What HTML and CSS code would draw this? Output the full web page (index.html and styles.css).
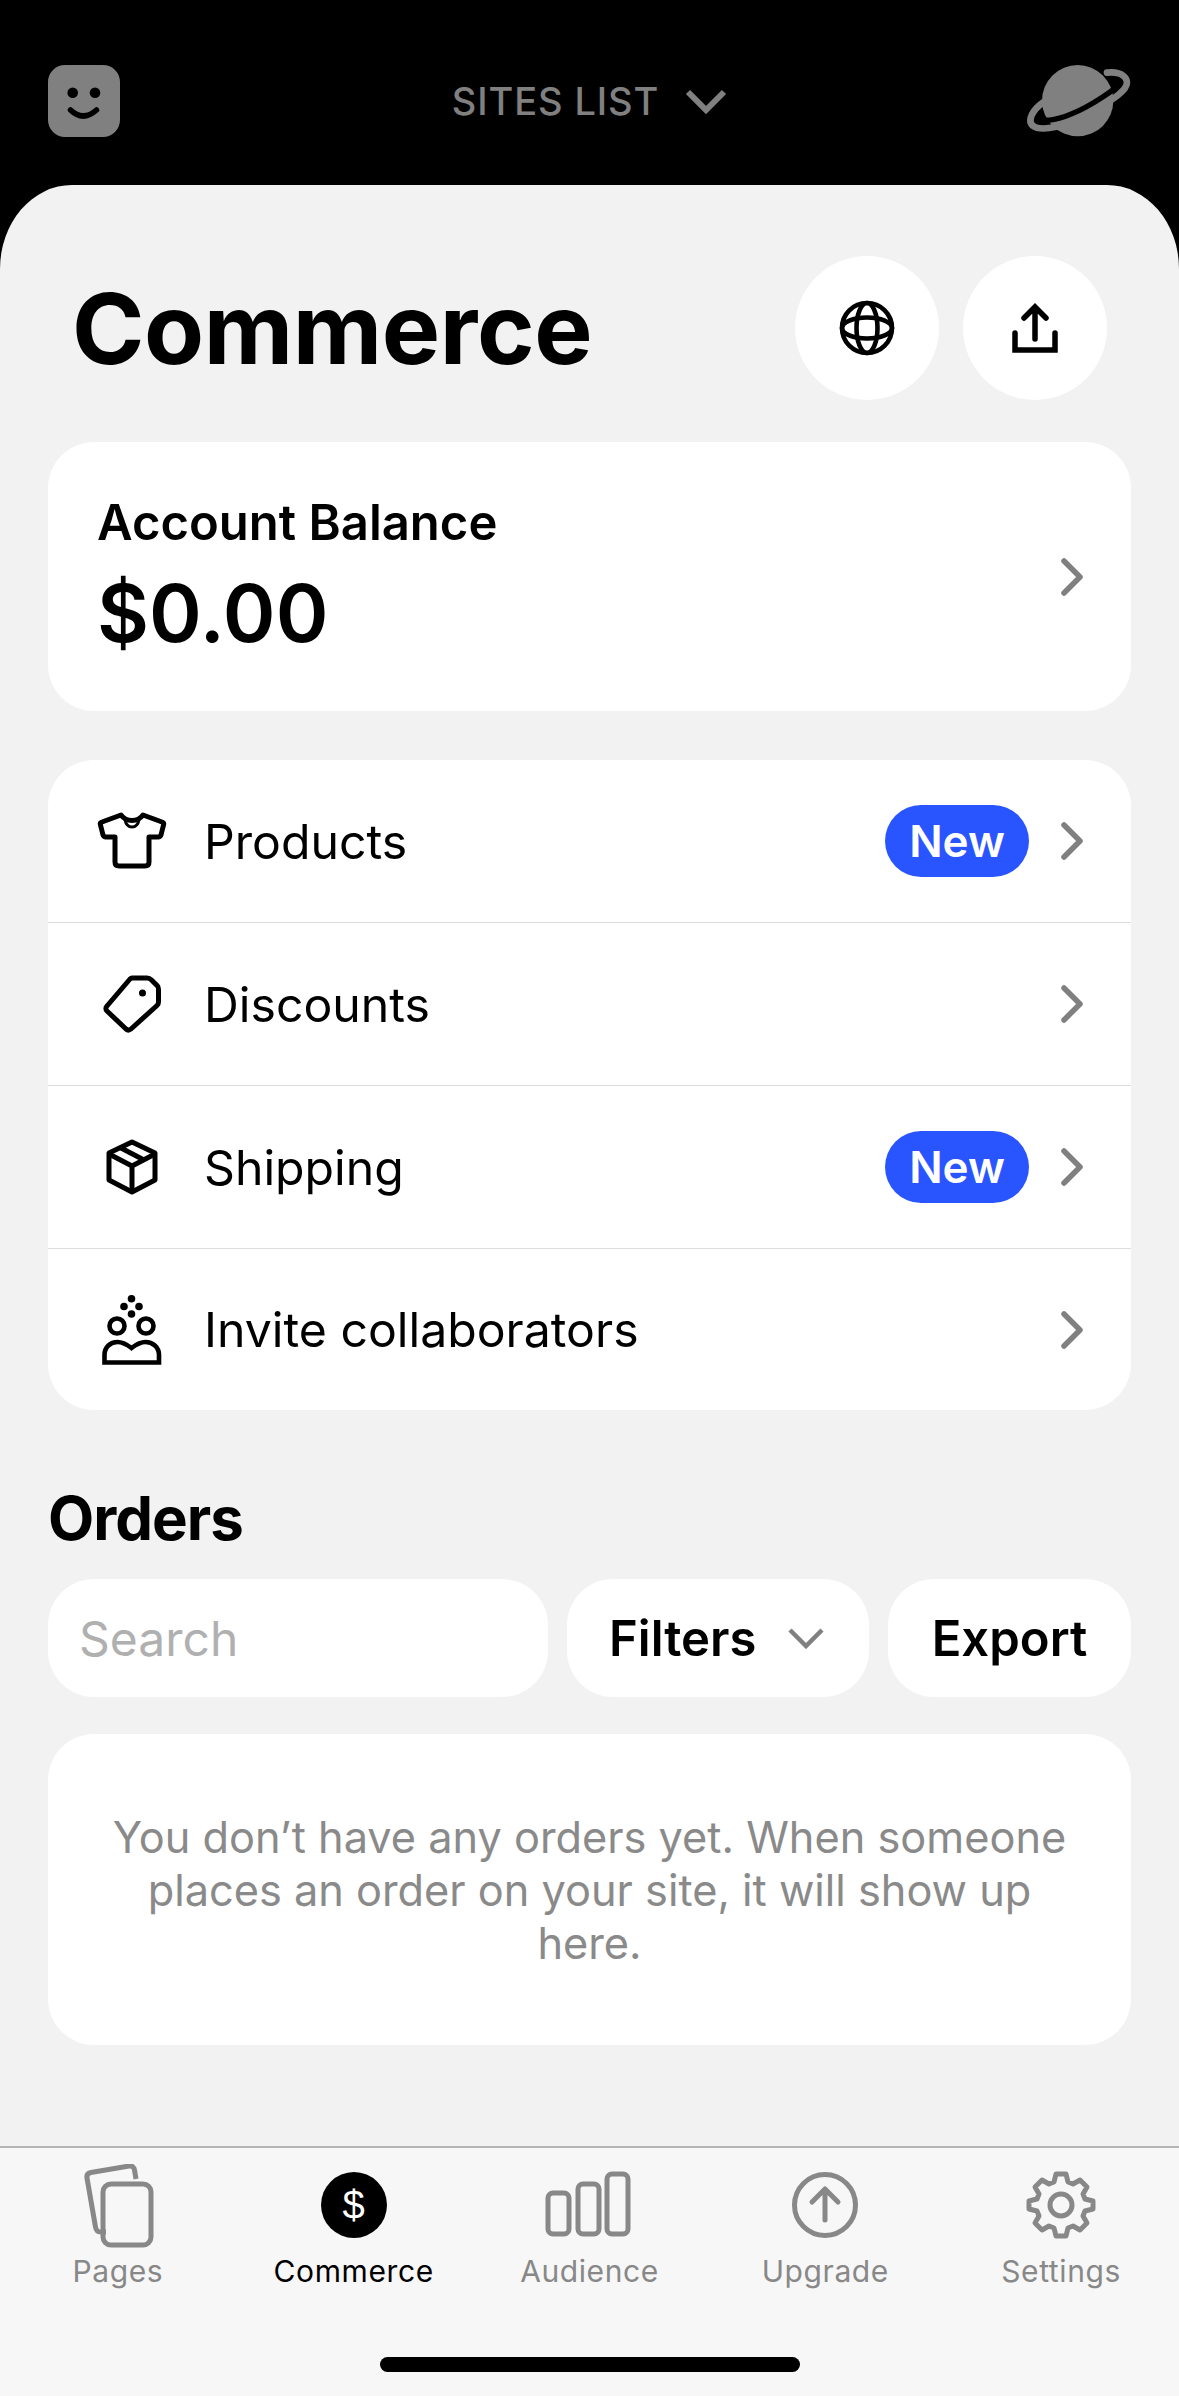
FILE: index.html
```html
<!DOCTYPE html>
<html lang="en">
<head>
    <meta charset="UTF-8">
    <title>Commerce</title>
    <link rel="stylesheet" href="styles.css">
</head>
<body>
    <div class="app">
        <header class="topbar">
            <svg width="72" height="72" viewBox="0 0 72 72">
                <rect width="72" height="72" rx="17" fill="#808080"/>
                <circle cx="24.700" cy="27.700" r="5.300" fill="#000"/>
                <circle cx="47" cy="27.700" r="5.300" fill="#000"/>
                <path d="M22.500 45Q35 57 48.500 45" fill="none" stroke="#000" stroke-width="5.500" stroke-linecap="round"/>
            </svg>
            <div class="sites">
                <span>SITES LIST</span>
                <svg width="42" height="26" viewBox="0 0 42 26"><path d="M3 4l18 18L39 4" fill="none" stroke="#808080" stroke-width="6"/></svg>
            </div>
            <svg class="top-planet" width="110" height="76" viewBox="0 0 110 76">
                <g transform="translate(-12 -8) scale(.3333)" fill="none">
                    <circle cx="200" cy="137" r="107" fill="#808080"/>
                    <path d="M90 155C70 175 68 192 90 195 130 200 190 178 245 145 285 120 335 90 330 72" stroke="#000" stroke-width="16"/>
                    <path d="M97 142C65 165 48 195 65 212 90 232 170 215 240 172 290 142 360 105 346 74 338 55 312 50 288 53" stroke="#808080" stroke-width="20" stroke-linecap="round"/>
                </g>
            </svg>
        </header>

        <main class="sheet">
            <div class="title-row">
                <h1>Commerce</h1>
                <div class="round-btns">
                    <div class="round-btn">
                        <svg width="56" height="56" viewBox="0 0 56 56" fill="none" stroke="#000" stroke-width="4.600">
                            <circle cx="28" cy="28" r="25"/>
                            <ellipse cx="28" cy="28" rx="10.500" ry="25"/>
                            <ellipse cx="28" cy="28" rx="25" ry="10.500"/>
                        </svg>
                    </div>
                    <div class="round-btn">
                        <svg width="46" height="50" viewBox="0 0 46 50" fill="none" stroke="#000" stroke-width="5.500" stroke-linecap="round">
                            <path d="M23 36V4M12 15L23 4l11 11"/>
                            <path d="M3 30v17h40V30"/>
                        </svg>
                    </div>
                </div>
            </div>

            <section class="card balance">
                <div>
                    <div class="balance-label">Account Balance</div>
                    <div class="balance-value">$0.00</div>
                </div>
                <svg class="chev" width="24" height="38" viewBox="0 0 24 38"><path d="M4 3l16 16L4 35"/></svg>
            </section>

            <section class="card menu">
                <div class="row">
                    <span class="row-icon">
                        <svg width="70" height="58" viewBox="0 0 70 58" fill="none" stroke="#000" stroke-width="5" stroke-linejoin="round">
                            <path d="M24 3L5 10c-1.500.500-2 1.500-1.500 3L6 23c.500 1.500 1.500 2 3 2h9v25c0 2.500 1.500 4 4 4h26c2.500 0 4-1.500 4-4V25h9c1.500 0 2.500-.500 3-2l2.500-10c.500-1.500 0-2.500-1.500-3L46 3c-3 4-7 5.500-11 5.500S27 7 24 3z"/>
                            <path d="M28 8c1 5 4 7 7 7s6-2 7-7" stroke-width="3"/>
                        </svg>
                    </span>
                    <span class="row-label">Products</span>
                    <span class="badge">New</span>
                    <svg class="chev" width="24" height="38" viewBox="0 0 24 38"><path d="M4 3l16 16L4 35"/></svg>
                </div>
                <div class="row">
                    <span class="row-icon">
                        <svg width="58" height="58" viewBox="0 0 58 58" fill="none" stroke="#000" stroke-width="5" stroke-linejoin="round">
                            <path d="M29 3h15c2 0 3 .500 4.500 2l6 6c1 1 1 2 1 3.500V27c0 1.500-.500 2.500-1.500 3.500L28 54c-1.500 1.300-3.500 1.300-5 0L4 36c-1.500-1.500-1.500-3.500 0-5L27 4c.700-.700 1-1 2-1z"/>
                            <circle cx="39.500" cy="18" r="2.500" fill="#000" stroke-width="2"/>
                        </svg>
                    </span>
                    <span class="row-label">Discounts</span>
                    <svg class="chev" width="24" height="38" viewBox="0 0 24 38"><path d="M4 3l16 16L4 35"/></svg>
                </div>
                <div class="row">
                    <span class="row-icon">
                        <svg width="52" height="56" viewBox="0 0 52 56" fill="none" stroke="#000" stroke-width="5" stroke-linejoin="round">
                            <path d="M26 3L3 14v27l23 12 23-12V14z"/>
                            <path d="M3 15l23 12 23-12M26 27v26M15 9l23 12"/>
                        </svg>
                    </span>
                    <span class="row-label">Shipping</span>
                    <span class="badge">New</span>
                    <svg class="chev" width="24" height="38" viewBox="0 0 24 38"><path d="M4 3l16 16L4 35"/></svg>
                </div>
                <div class="row">
                    <span class="row-icon">
                        <svg width="60" height="70" viewBox="0 0 60 70" fill="none" stroke="#000" stroke-width="4.600">
                            <circle cx="29.500" cy="3.800" r="3.800" fill="#000" stroke="none"/>
                            <circle cx="22" cy="11.500" r="3.800" fill="#000" stroke="none"/>
                            <circle cx="37" cy="11.500" r="3.800" fill="#000" stroke="none"/>
                            <circle cx="29.500" cy="19" r="3.800" fill="#000" stroke="none"/>
                            <circle cx="15" cy="31" r="7.500"/>
                            <circle cx="44" cy="31" r="7.500"/>
                            <path d="M2.500 67.500V60c0-8 6-13 13-13 6 0 10 3 14 6 4-3 8-6 14-6 7 0 13.500 5 13.500 13v7.500z"/>
                        </svg>
                    </span>
                    <span class="row-label">Invite collaborators</span>
                    <svg class="chev" width="24" height="38" viewBox="0 0 24 38"><path d="M4 3l16 16L4 35"/></svg>
                </div>
            </section>

            <h2>Orders</h2>
            <div class="order-tools">
                <div class="pill search">Search</div>
                <div class="pill filters">
                    Filters
                    <svg width="36" height="22" viewBox="0 0 36 22"><path d="M2 3l16 16L34 3" fill="none" stroke="#808080" stroke-width="4.500"/></svg>
                </div>
                <div class="pill export">Export</div>
            </div>

            <section class="card empty">
                You don’t have any orders yet. When someone places an order on your site, it will show up here.
            </section>
        </main>

        <nav class="tabbar">
            <div class="tab">
                <svg width="72" height="84" viewBox="0 0 72 84" fill="none" stroke="#888" stroke-width="5" stroke-linejoin="round">
                    <path d="M24 68h-5c-3 0-5-1.500-5.500-5L5 14c-.500-3 1-5 4-5.500l38-6.500c3-.500 5 1 5.500 4l1.500 9"/>
                    <rect x="21" y="20" width="48" height="61" rx="8"/>
                </svg>
                <span>Pages</span>
            </div>
            <div class="tab active">
                <svg width="72" height="84" viewBox="0 0 72 84">
                    <circle cx="36" cy="41" r="33" fill="#000"/>
                    <text x="36" y="55" text-anchor="middle" class="dollar">$</text>
                </svg>
                <span>Commerce</span>
            </div>
            <div class="tab">
                <svg width="88" height="84" viewBox="0 0 88 84" fill="none" stroke="#888" stroke-width="5">
                    <rect x="3" y="29" width="21" height="41" rx="5"/>
                    <rect x="33" y="20" width="21" height="50" rx="5"/>
                    <rect x="62" y="10" width="21" height="60" rx="5"/>
                </svg>
                <span>Audience</span>
            </div>
            <div class="tab">
                <svg width="72" height="84" viewBox="0 0 72 84" fill="none" stroke="#888" stroke-width="5" stroke-linecap="round" stroke-linejoin="round">
                    <circle cx="36" cy="41" r="30.500"/>
                    <path d="M36 56V26M23 38l13-13 13 13"/>
                </svg>
                <span>Upgrade</span>
            </div>
            <div class="tab">
                <svg width="72" height="84" viewBox="0 0 72 84" fill="none" stroke="#888" stroke-width="5" stroke-linejoin="round">
                    <circle cx="36" cy="41" r="11"/>
                    <path d="M31 10h10l2 8 5 2 7-4 7 7-4 7 2 5 8 2v8l-8 2-2 5 4 7-7 7-7-4-5 2-2 8H31l-2-8-5-2-7 4-7-7 4-7-2-5-8-2v-8l8-2 2-5-4-7 7-7 7 4 5-2z"/>
                </svg>
                <span>Settings</span>
            </div>
            <div class="home-bar"></div>
        </nav>
    </div>
</body>
</html>
```

FILE: styles.css
```css
body {
    margin: 0;
    background: #000;
    font-family: Inter, "Noto Sans", sans-serif;
    color: #000;
}

.app {
    width: 1179px;
    height: 2396px;
    display: flex;
    flex-direction: column;
    overflow: hidden;
}

.topbar {
    height: 185px;
    box-sizing: border-box;
    padding: 65px 48px 0;
    display: flex;
    justify-content: space-between;
    align-items: flex-start;
    position: relative;
}

.top-planet {
    margin: -2px -2px 0 0;
}

.sites {
    position: absolute;
    left: 0;
    right: 0;
    top: 65px;
    height: 72px;
    display: flex;
    justify-content: center;
    align-items: center;
    gap: 26px;
    color: #808080;
    font-size: 38px;
    font-weight: 500;
    letter-spacing: 0.9px;
}

.sheet {
    flex: 1;
    background: #f2f2f2;
    border-radius: 72px 72px 0 0 / 84px 84px 0 0;
    padding: 71px 48px 0;
}

.title-row {
    height: 144px;
    display: flex;
    justify-content: space-between;
    align-items: center;
    padding: 0 24px;
}

h1 {
    margin: 0;
    font-size: 98px;
    font-weight: 700;
    letter-spacing: -0.4px;
}

.round-btns {
    display: flex;
    gap: 24px;
}

.round-btn {
    width: 144px;
    height: 144px;
    border-radius: 50%;
    background: #fff;
    display: flex;
    align-items: center;
    justify-content: center;
}

.card {
    background: #fff;
    border-radius: 46px;
}

.chev {
    fill: none;
    stroke: #808080;
    stroke-width: 5.5px;
    stroke-linecap: round;
    stroke-linejoin: round;
}

.balance {
    margin-top: 42px;
    height: 269px;
    box-sizing: border-box;
    padding: 0 47px 0 49px;
    display: flex;
    justify-content: space-between;
    align-items: center;
}

.balance-label {
    font-size: 49px;
    font-weight: 600;
}

.balance-value {
    font-size: 80px;
    font-weight: 600;
    margin-top: 12px;
}

.menu {
    margin-top: 49px;
}

.row {
    height: 163px;
    box-sizing: border-box;
    padding: 0 47px 0 50px;
    display: flex;
    align-items: center;
    border-bottom: 1px solid #dedede;
}

.row:last-child {
    height: 161px;
    border-bottom: none;
}

.row-icon {
    width: 107px;
    display: flex;
    justify-content: center;
    margin-left: -20px;
    margin-right: 19px;
}

.row-label {
    flex: 1;
    font-size: 48.2px;
}

.badge {
    width: 144px;
    height: 72px;
    margin-right: 31px;
    border-radius: 36px;
    background: #2855ff;
    color: #fff;
    font-size: 44px;
    font-weight: 600;
    display: flex;
    align-items: center;
    justify-content: center;
}

h2 {
    margin: 77px 0 0;
    height: 92px;
    font-size: 60px;
    font-weight: 700;
    line-height: 62px;
    letter-spacing: -1px;
}

.order-tools {
    display: flex;
    gap: 19px;
}

.pill {
    height: 118px;
    border-radius: 46px;
    background: #fff;
    display: flex;
    align-items: center;
    font-size: 49px;
    font-weight: 600;
    box-sizing: border-box;
}

.search {
    width: 500px;
    padding-left: 31px;
    color: #b0b0b0;
    font-size: 48px;
    font-weight: 400;
}

.filters {
    width: 302px;
    padding-left: 42px;
    gap: 32px;
}

.export {
    width: 243px;
    justify-content: center;
}

.empty {
    margin-top: 37px;
    height: 311px;
    box-sizing: border-box;
    padding: 77px 56px 0;
    color: #8a8a8a;
    font-size: 43.3px;
    line-height: 53px;
    text-align: center;
}

.tabbar {
    height: 250px;
    box-sizing: border-box;
    background: #f7f7f7;
    border-top: 2px solid #b4b4b4;
    display: flex;
    position: relative;
    padding-top: 16px;
}

.tab {
    flex: 1;
    display: flex;
    flex-direction: column;
    align-items: center;
    color: #888;
    font-size: 30px;
    letter-spacing: 0.6px;
}

.tab span {
    margin-top: 5px;
}

.tab.active {
    color: #000;
}

.dollar {
    fill: #fff;
    font-size: 40px;
    font-family: "Liberation Sans", sans-serif;
}

.home-bar {
    position: absolute;
    left: 380px;
    width: 420px;
    top: 209px;
    height: 15px;
    border-radius: 8px;
    background: #000;
}
```
